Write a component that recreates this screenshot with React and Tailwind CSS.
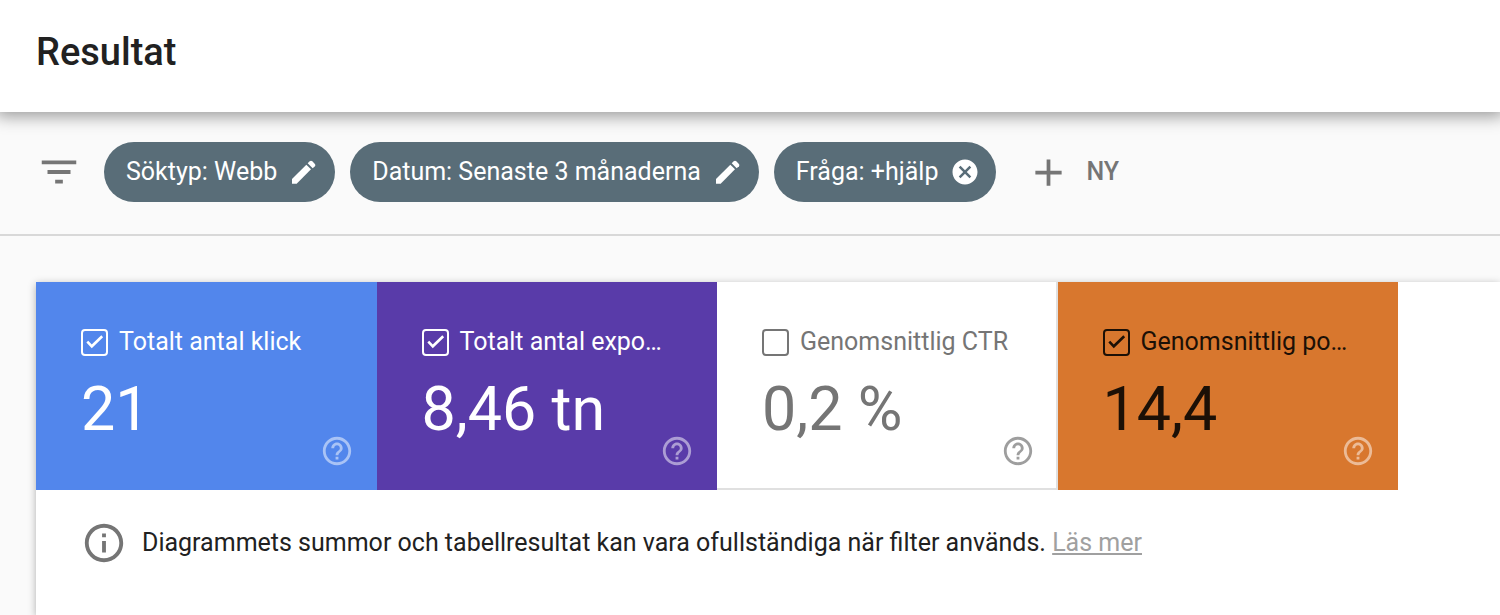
import { useState } from "react";
import {
  MdAdd,
  MdCancel,
  MdFilterList,
  MdHelpOutline,
  MdInfoOutline,
} from "react-icons/md";

const filters = [
  { label: "Söktyp: Webb", removable: false },
  { label: "Datum: Senaste 3 månaderna", removable: false },
  { label: "Fråga: +hjälp", removable: true },
];

const metrics = [
  {
    id: "clicks",
    label: "Totalt antal klick",
    value: "21",
    checked: true,
    tile: "bg-[#5286ec] text-white",
    help: "text-white/50",
  },
  {
    id: "impressions",
    label: "Totalt antal expo…",
    value: "8,46 tn",
    checked: true,
    tile: "bg-[#593ba9] text-white",
    help: "text-white/50",
  },
  {
    id: "ctr",
    label: "Genomsnittlig CTR",
    value: "0,2 %",
    checked: false,
    tile: "bg-white text-[#757575] shadow-[inset_-2px_-2px_0_#e0e0e0]",
    help: "text-[#9e9e9e]",
  },
  {
    id: "position",
    label: "Genomsnittlig po…",
    value: "14,4",
    checked: true,
    tile: "bg-[#d8772e] text-[#1c1006]",
    help: "text-white/50",
  },
];

const PencilIcon = () => (
  <svg viewBox="0 0 90 90" className="size-[30px]" fill="currentColor">
    <path d="M9 80V66L52 23l14 14L23 80z" />
    <path d="M56 19l6-6q4-3 8 0l7 7q4 4 1 8l-7 6z" />
  </svg>
);

const FilterChip = ({ label, removable }) => (
  <button
    type="button"
    className="flex h-[60px] items-center gap-3 rounded-full bg-[#596d78] pr-4 pl-[22px] text-white"
  >
    <span>{label}</span>
    {removable ? <MdCancel className="size-[30px]" /> : <PencilIcon />}
  </button>
);

const MetricTile = ({ metric }) => {
  const [checked, setChecked] = useState(metric.checked);

  return (
    <div className={`relative h-[208px] pt-11 pl-[45px] ${metric.tile}`}>
      <label htmlFor={metric.id} className="flex items-center gap-[11px]">
        <span className="relative size-[27px] shrink-0">
          <input
            id={metric.id}
            type="checkbox"
            checked={checked}
            onChange={(e) => setChecked(e.target.checked)}
            className="block size-[27px] appearance-none rounded-[4px] border-2 border-current"
          />
          {checked && (
            <svg
              viewBox="0 0 27 27"
              className="pointer-events-none absolute inset-0 size-[27px]"
              fill="none"
              stroke="currentColor"
              strokeWidth="2.6"
            >
              <path d="M6.3 12.6l4.5 4.7L21.2 7.2" />
            </svg>
          )}
        </span>
        <span className="leading-8 whitespace-nowrap">{metric.label}</span>
      </label>
      <p className="mt-4 text-[61px] leading-[70px]">{metric.value}</p>
      <button
        type="button"
        aria-label="Hjälp"
        className={`absolute right-[23px] bottom-[22px] ${metric.help}`}
      >
        <MdHelpOutline className="block size-[34px]" />
      </button>
    </div>
  );
};

export default function App() {
  return (
    <div className="flex min-h-screen flex-col overflow-hidden bg-[#fafafa] font-[Roboto,sans-serif] text-[25px] leading-8 text-[#212121]">
      <header className="relative flex h-28 items-center bg-white px-9 pb-2 shadow-[0_0_16px_4px_rgba(0,0,0,0.4)]">
        <h1 className="text-[38px] leading-[48px] font-medium">Resultat</h1>
      </header>

      <section className="flex items-center border-b-2 border-[#d8d8d8] px-9 pt-[30px] pb-8">
        <MdFilterList className="mr-[22px] size-[46px] shrink-0 text-[#757575]" />
        <div className="flex gap-[15px]">
          {filters.map((filter) => (
            <FilterChip key={filter.label} {...filter} />
          ))}
        </div>
        <button
          type="button"
          className="ml-[30px] flex items-center gap-[15px] font-medium text-[#757575]"
        >
          <MdAdd className="size-[45px]" />
          NY
        </button>
      </section>

      <main className="mt-[46px] ml-9 flex-1 bg-white shadow-[0_2px_8px_rgba(0,0,0,0.3)]">
        <div className="grid max-w-[1362px] grid-cols-4">
          {metrics.map((metric) => (
            <MetricTile key={metric.id} metric={metric} />
          ))}
        </div>
        <div className="flex items-center gap-[15px] px-[45px] pt-[30px]">
          <MdInfoOutline className="size-[46px] shrink-0 text-[#757575]" />
          <p>
            Diagrammets summor och tabellresultat kan vara ofullständiga när
            filter används.{" "}
            <a href="#" className="text-[#a0a0a0] underline">
              Läs mer
            </a>
          </p>
        </div>
      </main>
    </div>
  );
}
